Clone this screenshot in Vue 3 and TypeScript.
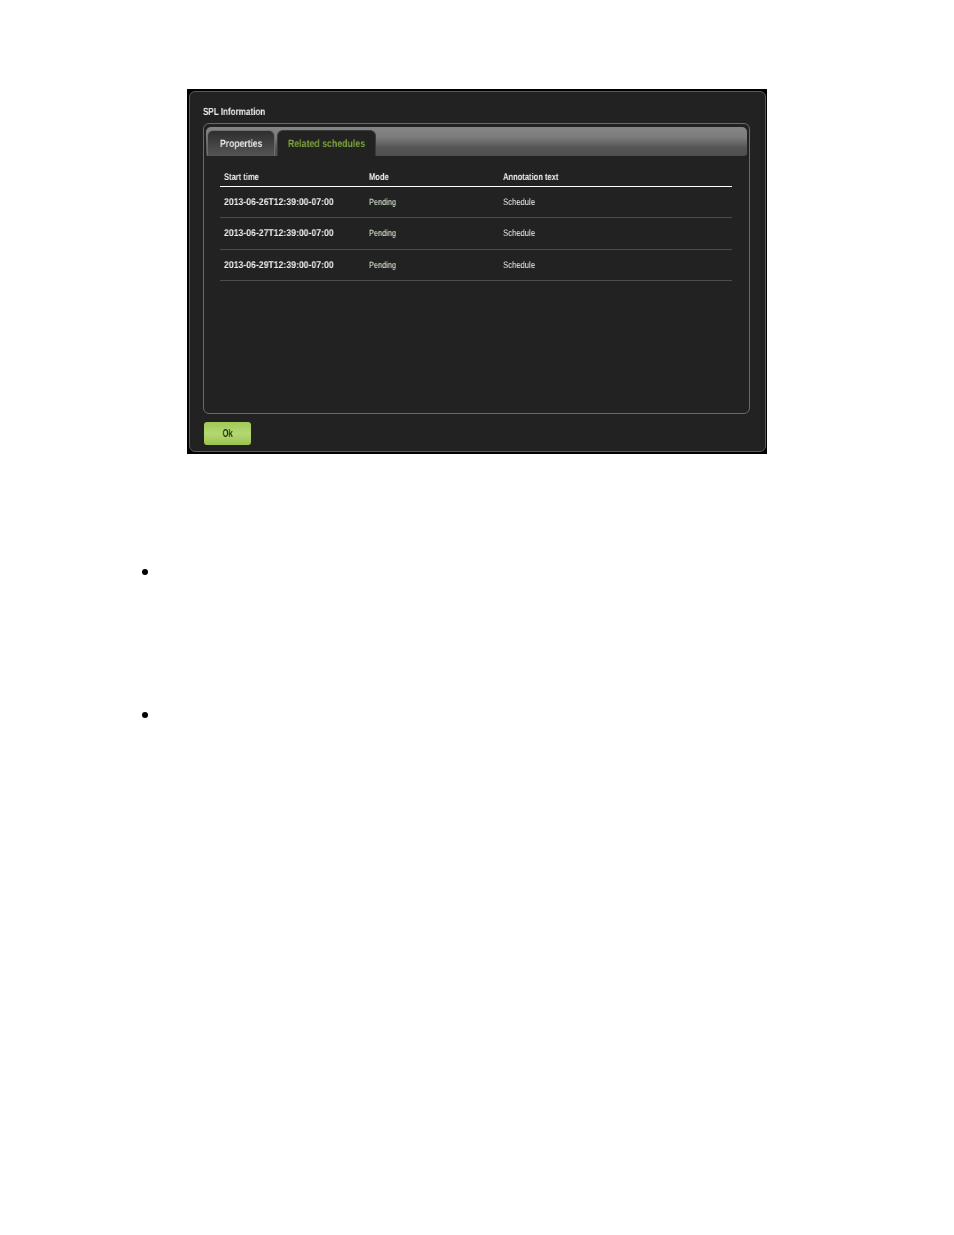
<script setup lang="ts">
const rows = [
  { start: '2013-06-26T12:39:00-07:00', mode: 'Pending', text: 'Schedule' },
  { start: '2013-06-27T12:39:00-07:00', mode: 'Pending', text: 'Schedule' },
  { start: '2013-06-29T12:39:00-07:00', mode: 'Pending', text: 'Schedule' },
]
</script>

<template>
  <div class="page">
    <section class="dialog">
      <div class="dialog-inner">
        <h1 class="title"><span class="narrow">SPL Information</span></h1>
        <div class="panel">
          <div class="tabs">
            <div class="tab"><span class="narrow narrow--mid">Properties</span></div>
            <div class="tab tab--active"><span class="narrow narrow--mid">Related schedules</span></div>
          </div>
          <div class="table">
            <div class="row row--head">
              <span class="cell"><span class="narrow">Start time</span></span>
              <span class="cell"><span class="narrow">Mode</span></span>
              <span class="cell"><span class="narrow">Annotation text</span></span>
            </div>
            <div v-for="row in rows" :key="row.start" class="row">
              <span class="cell start"><span class="narrow">{{ row.start }}</span></span>
              <span class="cell mode"><span class="narrow">{{ row.mode }}</span></span>
              <span class="cell note"><span class="narrow">{{ row.text }}</span></span>
            </div>
          </div>
        </div>
        <button class="ok"><span class="narrow narrow--mid">Ok</span></button>
      </div>
    </section>
    <ul class="bullets">
      <li></li>
      <li></li>
    </ul>
  </div>
</template>

<style>
html,
body {
  background: #fff;
}
</style>

<style scoped>
.page {
  height: 1235px;
  padding: 89px 187px 0;
  box-sizing: border-box;
  font-family: "Liberation Sans", Arial, sans-serif;
  text-rendering: geometricPrecision;
  overflow: hidden;
}
/* the original UI font is condensed, no narrow family is installed here */
.narrow {
  display: inline-block;
  white-space: nowrap;
  transform: scaleX(var(--squeeze, 0.8));
  transform-origin: left center;
  will-change: transform;
}
.narrow--mid {
  transform-origin: center;
}
.dialog {
  width: 580px;
  height: 365px;
  box-sizing: border-box;
  padding: 2px 1px 2px 2px;
  background: #000;
}
.dialog-inner {
  height: 100%;
  box-sizing: border-box;
  padding: 14px 15px 0 13px;
  background: #222;
  border: 1px solid #5a5a5a;
  border-radius: 6px;
}
.title {
  --squeeze: 0.785;
  margin: 0;
  height: 17px;
  font-size: 10.3px;
  line-height: 13px;
  font-weight: 700;
  color: #eee;
}
.panel {
  height: 291px;
  box-sizing: border-box;
  padding: 3px 2px 0;
  border: 1px solid #6a6a6a;
  border-radius: 6px;
}
.tabs {
  display: flex;
  gap: 2px;
  height: 29px;
  padding-left: 1px;
  border-radius: 5px 5px 3px 3px;
  background: linear-gradient(#858585 0%, #7c7c7c 35%, #565656 70%, #4e4e4e 100%);
}
.tab {
  --squeeze: 0.81;
  width: 68px;
  margin-top: 3px;
  box-sizing: border-box;
  padding-top: 7px;
  text-align: center;
  font-size: 10.6px;
  line-height: 13px;
  font-weight: 700;
  color: #e8e8e8;
  border: 1px solid #6e6e6e;
  border-bottom: 0;
  border-radius: 6px 6px 0 0;
  background: linear-gradient(#2e2e2e, #555);
}
.tab--active {
  --squeeze: 0.83;
  width: 99px;
  color: #7da53c;
  border-color: #3a3a3a;
  background: #222;
}
.table {
  margin: 14px 15px 0 14px;
}
.row {
  display: grid;
  grid-template-columns: 145px 134px 1fr;
  height: 31.5px;
  box-sizing: border-box;
  padding: 11px 4px 0;
  border-bottom: 1px solid #4c4c4c;
  font-size: 9.4px;
  line-height: 10px;
  color: #ddd;
}
.row--head {
  --squeeze: 0.78;
  height: 16.5px;
  padding-top: 2.5px;
  border-bottom: 1.5px solid #fff;
  font-size: 9.7px;
  font-weight: 700;
  color: #eee;
}
.cell {
  display: block;
}
.start {
  --squeeze: 0.887;
  font-size: 9.8px;
  font-weight: 700;
  color: #eee;
}
.mode {
  --squeeze: 0.82;
  color: #e6f6dc;
  font-size: 9px;
  line-height: 9px;
}
.note {
  --squeeze: 0.82;
  color: #eee;
  line-height: 8px;
}
.ok {
  --squeeze: 0.75;
  display: block;
  width: 47px;
  height: 23px;
  margin: 8px 0 0 1px;
  padding: 1px 0 0;
  border: 0;
  border-radius: 3px;
  background: linear-gradient(#9fc955, #b3d873 50%, #9bc44f);
  font: 700 10px/22px "Liberation Sans", Arial, sans-serif;
  color: #1f2a10;
}
.bullets {
  list-style: none;
  margin: 0;
  padding: 115px 0 0 0;
}
.bullets li {
  width: 6px;
  height: 6px;
  margin-left: -45px;
  margin-bottom: 137px;
  border-radius: 50%;
  background: #000;
}
</style>
